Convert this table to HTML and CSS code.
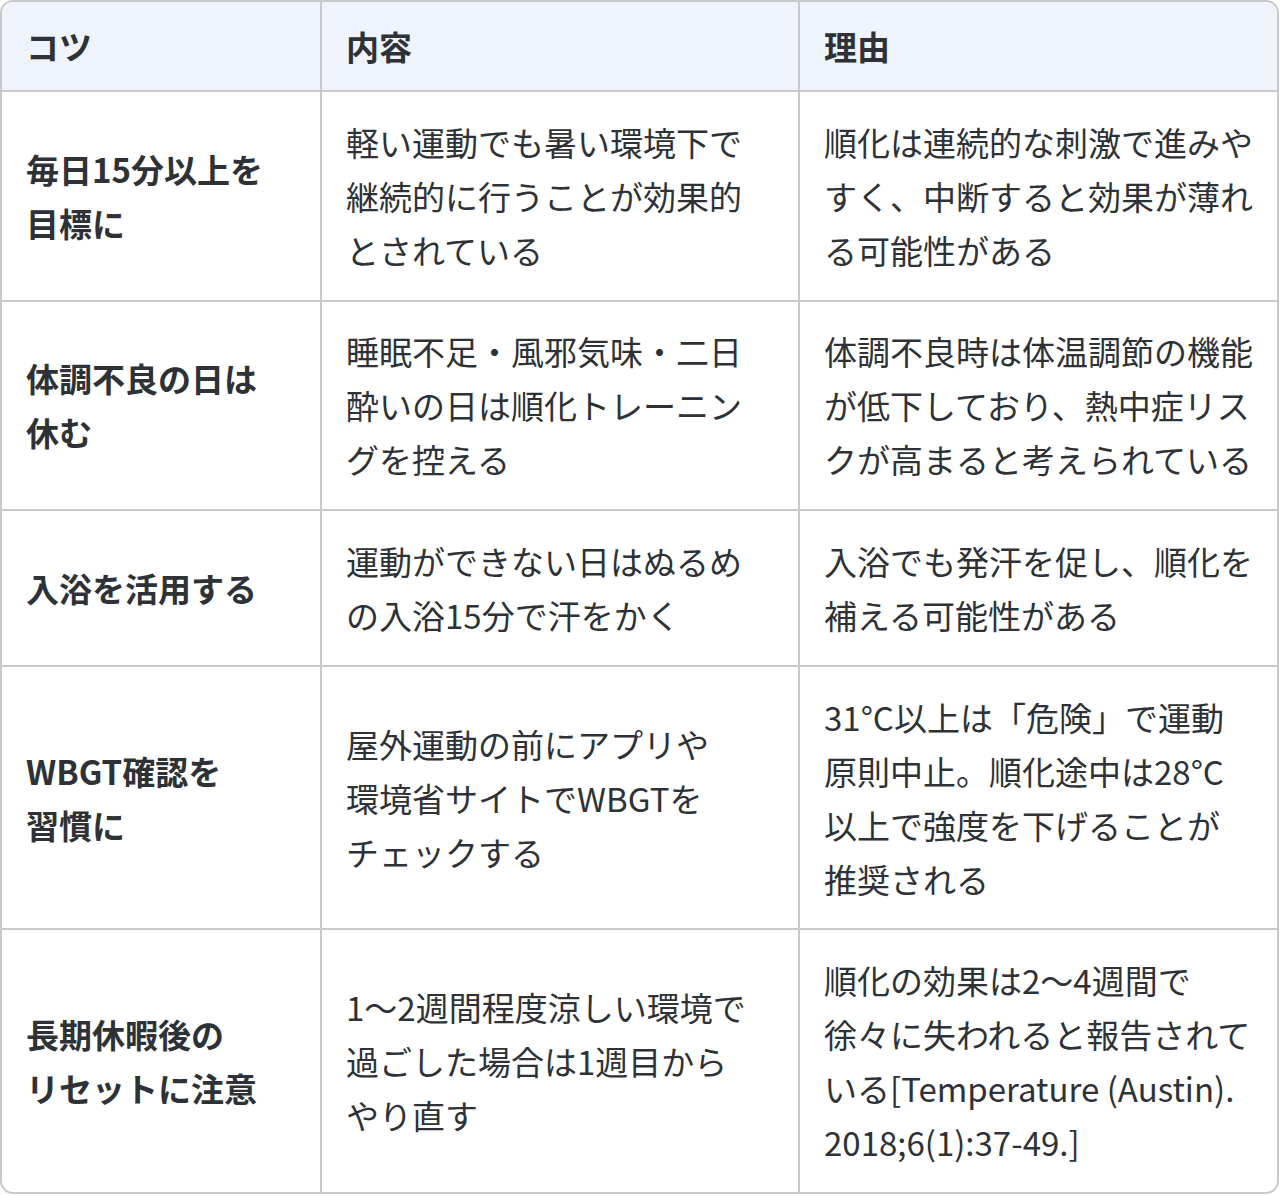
FILE: index.html
```html
<!DOCTYPE html>
<html lang="ja">
<head>
<meta charset="utf-8">
<title>暑熱順化のコツ</title>
<link rel="stylesheet" href="styles.css">
</head>
<body>
<div class="table">
  <div class="cell head">コツ</div>
  <div class="cell head">内容</div>
  <div class="cell head last">理由</div>

  <div class="cell tip">毎日15分以上を<br>目標に</div>
  <div class="cell">軽い運動でも暑い環境下で継続的に行うことが効果的とされている</div>
  <div class="cell last">順化は連続的な刺激で進みやすく、中断すると効果が薄れる可能性がある</div>

  <div class="cell tip">体調不良の日は<br>休む</div>
  <div class="cell">睡眠不足・風邪気味・二日酔いの日は順化トレーニングを控える</div>
  <div class="cell last">体調不良時は体温調節の機能が低下しており、熱中症リスクが高まると考えられている</div>

  <div class="cell tip">入浴を活用する</div>
  <div class="cell">運動ができない日はぬるめの入浴15分で汗をかく</div>
  <div class="cell last">入浴でも発汗を促し、順化を補える可能性がある</div>

  <div class="cell tip">WBGT確認を<br>習慣に</div>
  <div class="cell"><span>屋外運動の前にアプリや<span class="word">環境省</span>サイトでWBGTを<span class="word">チェック</span>する</span></div>
  <div class="cell last"><span>31°C以上は「危険」で運動原則中止。順化途中は28°C以上で強度を下げることが<span class="word">推奨</span>される</span></div>

  <div class="cell tip bottom">長期休暇後の<br>リセットに注意</div>
  <div class="cell bottom"><span>1〜2週間程度涼しい環境で過ごした場合は1週目から<span class="word">やり直す</span></span></div>
  <div class="cell last bottom">順化の効果は2〜4週間で徐々に失われると報告されている[Temperature (Austin). 2018;6(1):37-49.]</div>
</div>
</body>
</html>
```

FILE: styles.css
```css
html, body {
  margin: 0;
  padding: 0;
  background: #ffffff;
}

body {
  font-family: "Noto Sans CJK JP", "Noto Sans", sans-serif;
  color: #2e3236;
}

.table {
  width: 1279px;
  box-sizing: border-box;
  border: 2px solid #c9c9c9;
  border-radius: 13px;
  overflow: hidden;
  display: grid;
  grid-template-columns: 320px 478px 477px;
}

.cell {
  box-sizing: border-box;
  border-right: 2px solid #c9c9c9;
  border-bottom: 2px solid #c9c9c9;
  padding: 22.8px 24px;
  font-size: 33px;
  line-height: 54px;
  display: grid;
  align-items: center;
}

.cell.last {
  border-right: none;
}

.cell.bottom {
  border-bottom: none;
}

.head {
  background: #eff3fb;
  font-weight: 700;
  padding-top: 17px;
  padding-bottom: 17px;
}

.tip {
  font-weight: 700;
}

.word {
  white-space: nowrap;
}
```
